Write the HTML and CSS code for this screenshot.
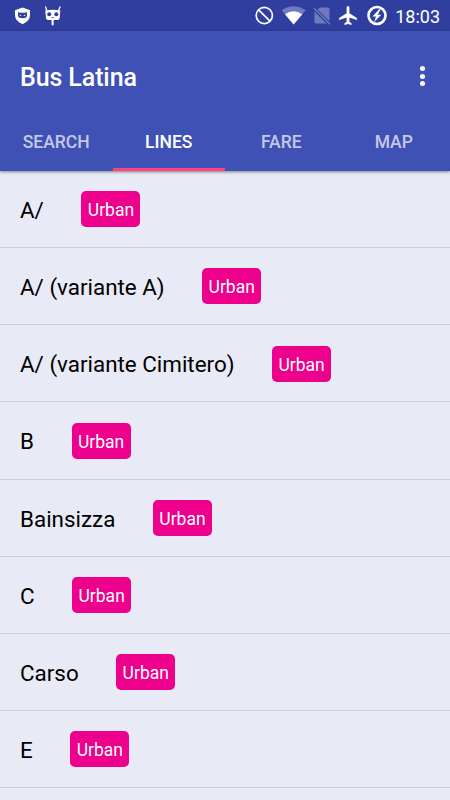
FILE: index.html
```html
<!DOCTYPE html>
<html lang="en">
<head>
<meta charset="utf-8">
<title>Bus Latina</title>
<link rel="stylesheet" href="styles.css">
</head>
<body>
<div class="screen">
  <div class="status">
    <svg class="icons-left" width="50" height="30" viewBox="0 0 50 30">
      <path fill="#fff" d="M7.500 7.500 15 10.200V15q0 6-7.500 9.300Q0 21 0 15v-4.800Z"/>
      <path fill="#303f9f" d="M3.400 11.800q1.200.8 2 1h4.200q.8-.2 2-1l.6 3.200-.9 2.600q-3.800 1.500-7.600 0l-.9-2.600Z"/>
      <path fill="#fff" d="m4.500 14.500 2.300 1-1.800.5Zm6 0-2.300 1 1.800.5Z"/>
      <path fill="none" stroke="#fff" stroke-width="1.300" stroke-linecap="round" d="m31.800 10.500-1.200-3.500m13 3.500 1.400-3.500"/>
      <path fill="#fff" d="M30.300 10.500q7.500-1.500 15 0l-.6 7.400q-.2 2-2.200 2H33.200q-2 0-2.200-2Z"/>
      <circle cx="34.200" cy="14.300" r="2" fill="#303f9f"/><circle cx="41.300" cy="14.300" r="2" fill="#303f9f"/>
      <path stroke="#303f9f" stroke-width=".8" d="M36.500 17.600h2.600"/>
      <path stroke="#fff" stroke-width="2" stroke-linecap="round" d="M37.600 20v4.500"/>
    </svg>
    <svg class="icons-right" width="135" height="30" viewBox="0 0 135 30">
      <g fill="none" stroke="#fff" stroke-width="1.700"><circle cx="10.300" cy="15.500" r="8.100"/><path d="m4.600 9.800 11.400 11.400"/></g>
      <path fill="#6f79bb" d="M27.500 10.300q12-8.200 24.200 0L39.600 24.500Z"/>
      <path fill="#fff" d="M31 14.200q8.600-5.900 17.300 0l-8.700 10.300Z"/>
      <path fill="#6f79bb" d="M66 7.500h8q1.500 0 1.500 1.500v12.200L63.500 9.600ZM60.500 11.500 72.500 23.500H62q-1.500 0-1.500-1.500Z"/>
      <path stroke="#6f79bb" stroke-width="1.500" d="m60 8.300 16 15.900"/>
      <path fill="#fff" d="M94 6q1.400 0 1.400 1.500v5.700l7.500 4.700v2l-7.500-2.400v4.300l2.100 1.500v1.600l-3.500-1-3.500 1v-1.600l2.100-1.500v-4.300L85.100 19.900v-2l7.500-4.700V7.500Q92.600 6 94 6Z"/>
      <circle cx="123" cy="15.500" r="8.500" fill="none" stroke="#fff" stroke-width="2.600"/>
      <path fill="#fff" d="M125.300 9.200 118.500 16.500h3.400l-1.700 5.600 7-7.400H123.700l2.900-5.500Z"/>
    </svg>
    <span class="clock">18:03</span>
  </div>
  <header class="appbar">
    <div class="toolbar">
      <h1>Bus Latina</h1>
      <div class="menu"><i></i><i></i><i></i></div>
    </div>
    <nav class="tabs">
      <span>SEARCH</span><span class="active">LINES</span><span>FARE</span><span>MAP</span>
    </nav>
  </header>
  <main class="list">
    <div class="row"><span class="name">A/</span><span class="badge">Urban</span></div>
    <div class="row"><span class="name">A/ (variante A)</span><span class="badge">Urban</span></div>
    <div class="row"><span class="name">A/ (variante Cimitero)</span><span class="badge">Urban</span></div>
    <div class="row"><span class="name">B</span><span class="badge">Urban</span></div>
    <div class="row"><span class="name">Bainsizza</span><span class="badge">Urban</span></div>
    <div class="row"><span class="name">C</span><span class="badge">Urban</span></div>
    <div class="row"><span class="name">Carso</span><span class="badge">Urban</span></div>
    <div class="row"><span class="name">E</span><span class="badge">Urban</span></div>
  </main>
</div>
</body>
</html>
```
FILE: styles.css
```css
* { box-sizing: border-box; }
body { margin: 0; font-family: Roboto, sans-serif; background: #e8eaf6; }
.screen { height: 800px; overflow: hidden; display: flex; flex-direction: column; }
.status { flex: none; height: 31px; background: #303f9f; display: flex; align-items: flex-start; padding: 0 10px 0 15px; }
.icons-right { margin-left: auto; }
.icons-left, .icons-right { display: block; }
.clock { width: 51px; text-align: right; color: #fff; font-size: 18px; line-height: 33px; }
.appbar { flex: none; height: 140px; background: #3f51b5; color: #fff; box-shadow: 0 1px 3px rgba(0,0,0,.45); display: flex; flex-direction: column; position: relative; }
.toolbar { height: 80px; padding: 12px 24px 0 20px; display: flex; justify-content: space-between; }
h1 { margin: 0; font-size: 25px; line-height: 70px; font-weight: 500; letter-spacing: -.1px; }
.menu { display: flex; flex-direction: column; gap: 2.500px; padding-top: 23px; margin-right: 1px; }
.menu i { width: 5px; height: 5px; border-radius: 50%; background: #fff; }
.tabs { height: 60px; display: flex; }
.tabs span { flex: 1; text-align: center; font-size: 17.500px; font-weight: 500; line-height: 62px; color: rgba(255,255,255,.7); }
.tabs .active { color: #fff; border-bottom: 3px solid #ff4081; }
.row { height: 77.130px; border-bottom: 1px solid #cbcdd9; display: flex; align-items: center; gap: 37.600px; padding-left: 20px; }
.name { font-size: 22.400px; color: #000; line-height: 30px; padding-top: 2px; }
.badge { width: 59px; height: 36px; margin-top: .6px; border-radius: 5px; background: #ec008c; color: #fff; text-align: center; font-size: 17.500px; line-height: 38px; }
```
